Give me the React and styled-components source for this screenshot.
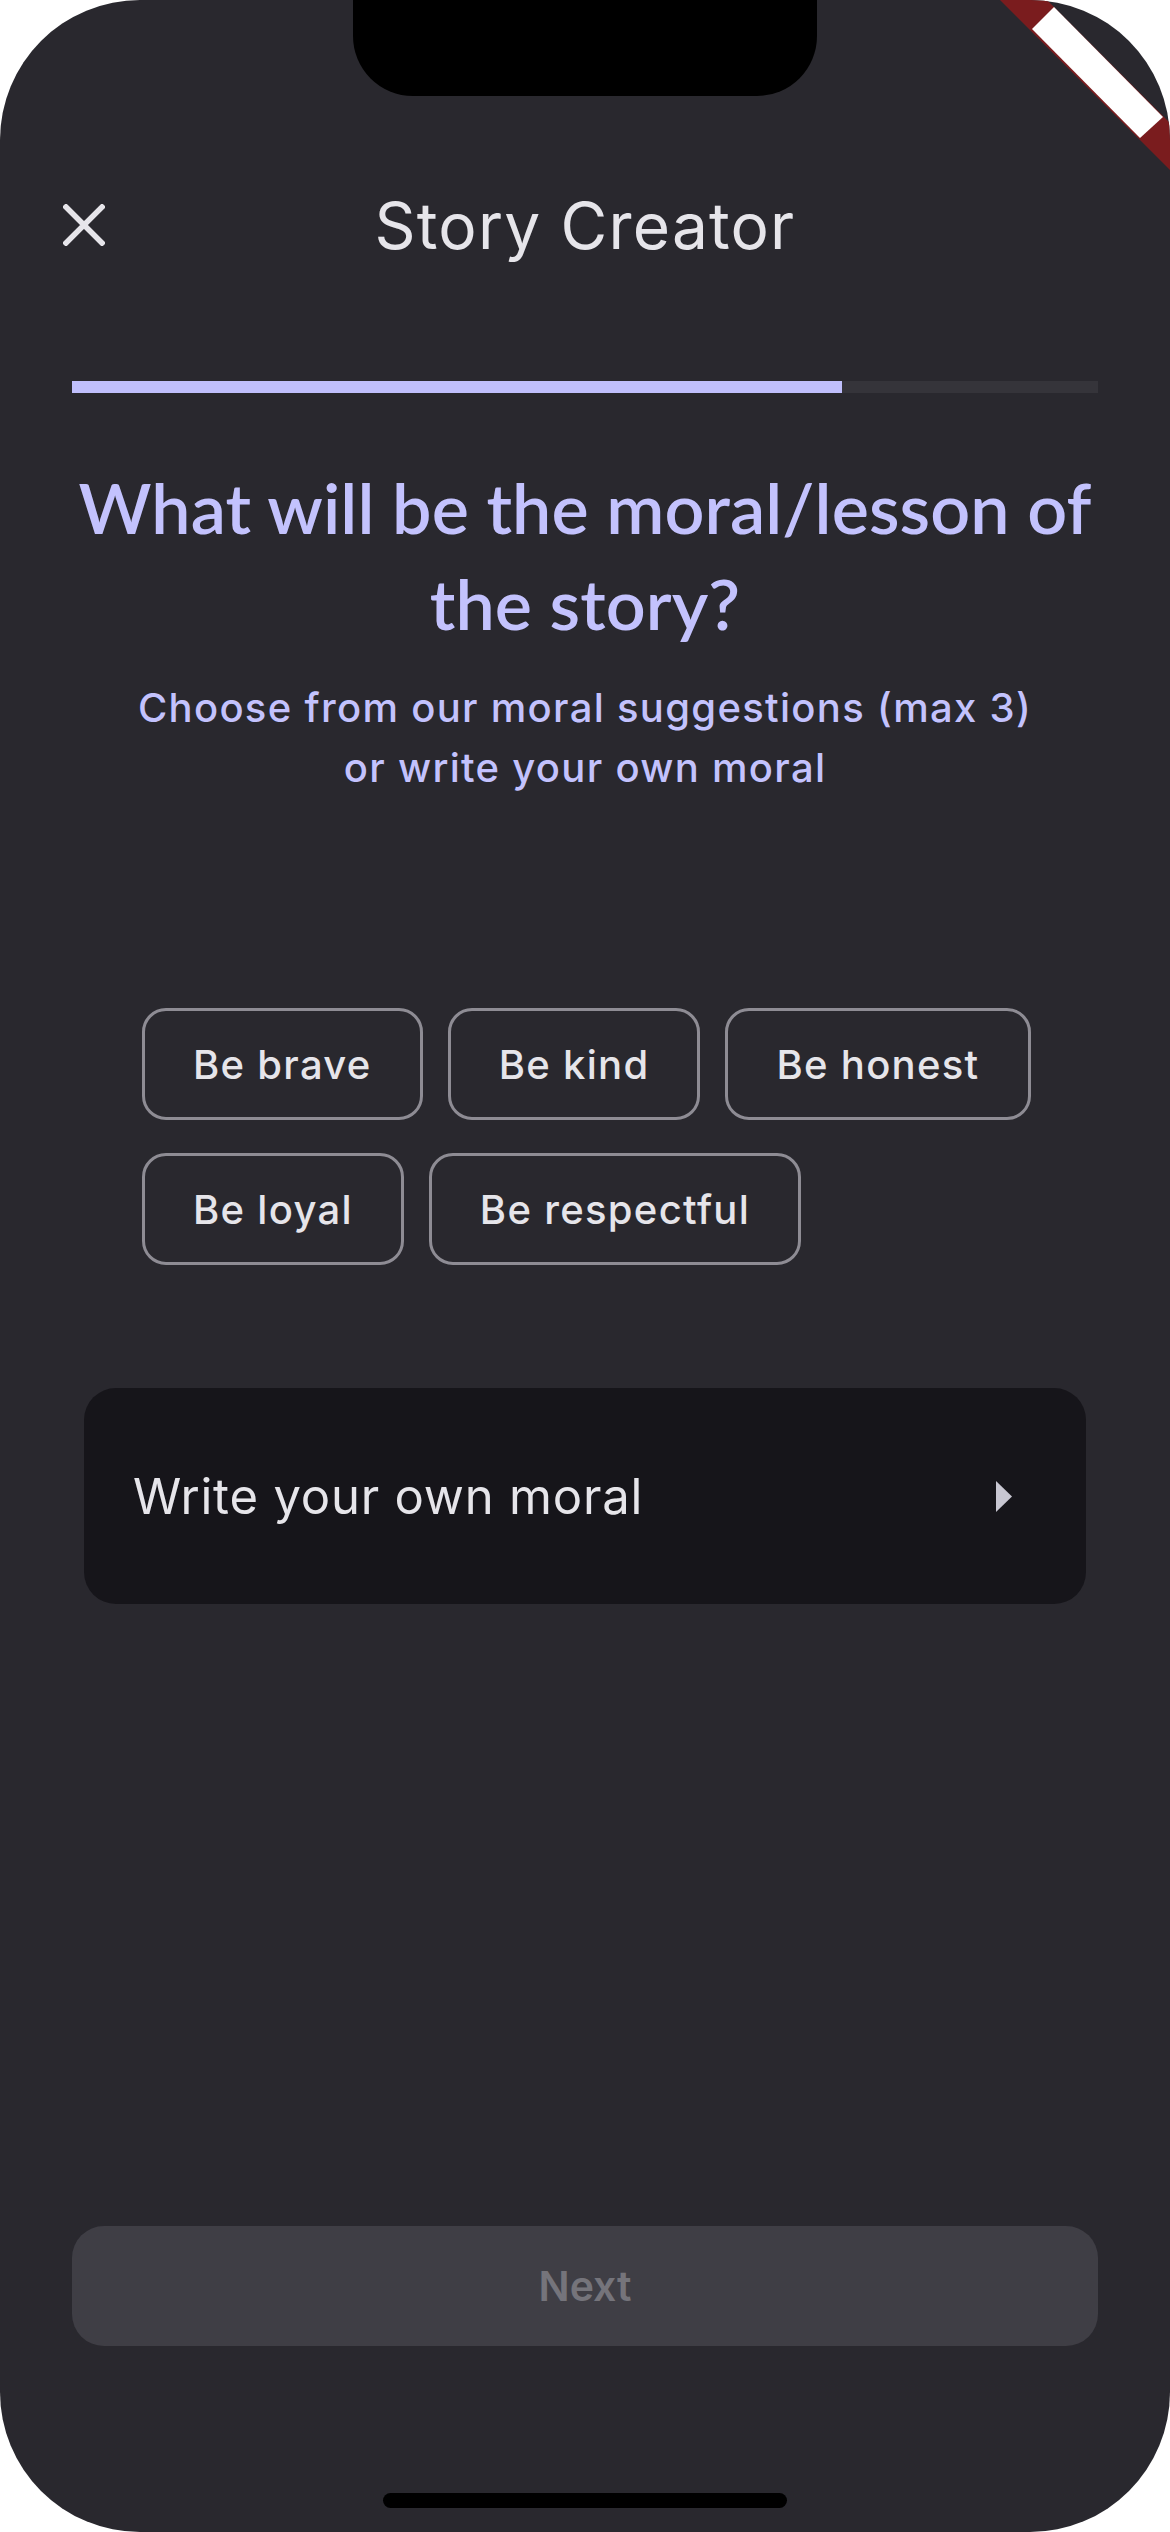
import styled, { createGlobalStyle } from "styled-components";

const GlobalStyle = createGlobalStyle`
  html, body {
    margin: 0;
    padding: 0;
    background: #ffffff;
  }
  body {
    font-family: Inter, "Noto Sans", sans-serif;
  }
`;

// phone screen with rounded corners
const Screen = styled.div`
  position: relative;
  width: 1170px;
  height: 2532px;
  border-radius: 140px;
  overflow: hidden;
  background: #29282e;
  display: flex;
  flex-direction: column;
  box-sizing: border-box;
  padding-bottom: 186px;
`;

const Notch = styled.div`
  position: absolute;
  top: 0;
  left: 353px;
  width: 464px;
  height: 96px;
  background: #000;
  border-radius: 0 0 60px 60px;
`;

const HomeIndicator = styled.div`
  position: absolute;
  bottom: 24px;
  left: 383px;
  width: 404px;
  height: 15px;
  border-radius: 8px;
  background: #000;
`;

const Banner = styled.svg`
  position: absolute;
  top: 0;
  right: 0;
`;

const Header = styled.header`
  margin-top: 175px;
  height: 100px;
  display: grid;
  grid-template-columns: 1fr auto 1fr;
  align-items: center;
  padding: 0 63px;
`;

const CloseButton = styled.button`
  justify-self: start;
  width: 42px;
  height: 42px;
  padding: 0;
  border: none;
  background: none;
  display: flex;
`;

const Title = styled.h1`
  margin: 0;
  font-family: Inter, sans-serif;
  font-weight: 400;
  font-size: 64px;
  color: #e6e5ea;
  letter-spacing: 1.2px;
`;

const Track = styled.div`
  margin: 106px 72px 0;
  height: 12px;
  background: #35343a;
`;

const Fill = styled.div`
  height: 100%;
  background: #c0bffc;
`;

const Heading = styled.h2`
  margin: 66px 0 0;
  text-align: center;
  font-family: Lato, "Noto Sans", sans-serif;
  font-weight: 600;
  font-size: 70px;
  line-height: 96px;
  letter-spacing: 0.1px;
  color: #c3c2fd;
`;

const Subtitle = styled.p`
  margin: 27px 0 0;
  text-align: center;
  font-family: Inter, sans-serif;
  font-weight: 500;
  font-size: 40px;
  line-height: 60px;
  letter-spacing: 1.3px;
  color: #c3c2fd;
`;

const ChipWrap = styled.div`
  margin: 210px 0 0 142px;
  width: 900px;
  display: flex;
  flex-wrap: wrap;
  column-gap: 25px;
  row-gap: 33px;
`;

const Chip = styled.button`
  height: 112px;
  box-sizing: border-box;
  padding: 0 48px;
  border: 3px solid #8e8c94;
  border-radius: 24px;
  background: transparent;
  font-family: Inter, sans-serif;
  font-weight: 500;
  font-size: 40px;
  letter-spacing: 1.3px;
  color: #e6e5ea;
`;

const MoralCard = styled.div`
  margin: 123px 84px 0;
  height: 216px;
  border-radius: 32px;
  background: #16151a;
  display: flex;
  align-items: center;
  justify-content: space-between;
  padding: 0 74px 0 49px;
`;

const CardLabel = styled.span`
  font-family: Inter, sans-serif;
  font-weight: 400;
  font-size: 49px;
  letter-spacing: 0.8px;
  color: #e6e5ea;
`;

const NextButton = styled.button`
  margin: auto 72px 0;
  height: 120px;
  border: none;
  border-radius: 32px;
  background: #3f3e45;
  font-family: Inter, sans-serif;
  font-weight: 600;
  font-size: 41px;
  color: #75747b;
`;

const morals = ["Be brave", "Be kind", "Be honest", "Be loyal", "Be respectful"];

const App = () => {
  const progress = 0.75;
  return (
    <>
      <GlobalStyle />
      <Screen>
        <Header>
          <CloseButton aria-label="Close">
            <svg width="42" height="42" viewBox="0 0 42 42">
              <path
                d="M3 3 L39 39 M39 3 L3 39"
                stroke="#e6e5ea"
                strokeWidth="5.5"
                strokeLinecap="square"
              />
            </svg>
          </CloseButton>
          <Title>Story Creator</Title>
          <span />
        </Header>

        <Track>
          <Fill style={{ width: `${progress * 100}%` }} />
        </Track>

        <Heading>
          What will be the moral/lesson of
          <br />
          the story?
        </Heading>
        <Subtitle>
          Choose from our moral suggestions (max 3)
          <br />
          or write your own moral
        </Subtitle>

        <ChipWrap>
          {morals.map((m) => (
            <Chip key={m}>{m}</Chip>
          ))}
        </ChipWrap>

        <MoralCard>
          <CardLabel>Write your own moral</CardLabel>
          <svg width="16" height="31" viewBox="0 0 16 31">
            <path d="M0 0 L16 15.5 L0 31 Z" fill="#c8c7d2" />
          </svg>
        </MoralCard>

        <NextButton disabled>Next</NextButton>

        {/* device overlays */}
        <Notch />
        <HomeIndicator />
        <Banner width="170" height="170" viewBox="1000 0 170 170">
          <polygon points="1000,0 1047,0 1170,123 1170,170" fill="#7a1c1e" />
          <polygon points="1054,7 1032,29 1140,138 1163,117" fill="#ffffff" />
        </Banner>
      </Screen>
    </>
  );
};

export default App;
